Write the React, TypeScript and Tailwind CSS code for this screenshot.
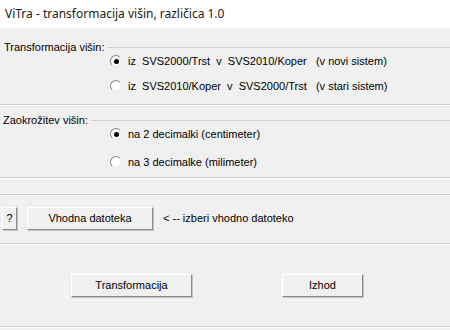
import React from "react";

function Radio({ checked, label }: { checked?: boolean; label: string }) {
    return (
        <div className="flex items-center h-[16px] pl-[110px]">
            <span className="w-[12px] h-[12px] rounded-full bg-white border border-t-[#8a8a8a] border-l-[#8a8a8a] border-b-[#e8e8e8] border-r-[#e8e8e8] flex items-center justify-center">
                {checked && <span className="w-[5px] h-[5px] rounded-full bg-black" />}
            </span>
            <span className="ml-[6px] whitespace-pre">{label}</span>
        </div>
    );
}

function Btn({ label, className }: { label: string; className: string }) {
    return (
        <div
            className={`h-[23px] flex items-center justify-center bg-[#f0f0f0] border border-t-white border-l-white border-b-[#8c8c8c] border-r-[#8c8c8c] shadow-[1px_1px_0_#c4c4c4] ${className}`}
        >
            {label}
        </div>
    );
}

function Line({ className = "" }: { className?: string }) {
    return <div className={`h-px bg-[#d0d0d0] border-b border-white box-content ${className}`} />;
}

export default function App() {
    return (
        <div className="w-[450px] h-[330px] overflow-hidden bg-[#f0f0f0] text-[11px] text-black font-['Liberation_Sans',Arial,sans-serif]">
            {/* title bar */}
            <div className="h-[28px] bg-white flex items-center pl-[5px] text-[12px] font-['Noto_Sans',sans-serif] text-[#1a1a1a]">
                ViTra - transformacija višin, različica 1.0
            </div>

            {/* group 1 */}
            <div className="mt-[13px] flex items-center h-[12px]">
                <span className="pl-[4px] pr-[3px]">Transformacija višin:</span>
                <div className="flex-1 h-px bg-[#d0d0d0]" />
            </div>
            <Radio checked label="iz  SVS2000/Trst  v  SVS2010/Koper   (v novi sistem)" />
            <div className="mt-[9px]">
                <Radio label="iz  SVS2010/Koper  v  SVS2000/Trst   (v stari sistem)" />
            </div>
            <Line className="mt-[10px]" />

            {/* group 2 */}
            <div className="mt-[8px] flex items-center h-[12px]">
                <span className="pl-[3px] pr-[3px]">Zaokrožitev višin:</span>
                <div className="flex-1 h-px bg-[#d0d0d0]" />
            </div>
            <Radio checked label="na 2 decimalki (centimeter)" />
            <div className="mt-[12px]">
                <Radio label="na 3 decimalke (milimeter)" />
            </div>
            <Line className="mt-[7px]" />

            {/* group 3 */}
            <Line className="mt-[15px]" />
            <div className="mt-[11px] flex items-center">
                <Btn label="?" className="ml-[2px] w-[15px]" />
                <Btn label="Vhodna datoteka" className="ml-[10px] w-[126px]" />
                <span className="ml-[10px]">&lt; -- izberi vhodno datoteko</span>
            </div>
            <Line className="mt-[13px]" />

            <div className="mt-[29px] flex items-center">
                <Btn label="Transformacija" className="ml-[71px] w-[121px]" />
                <Btn label="Izhod" className="ml-[90px] w-[81px]" />
            </div>
            <Line className="mt-[29px]" />
        </div>
    );
}
